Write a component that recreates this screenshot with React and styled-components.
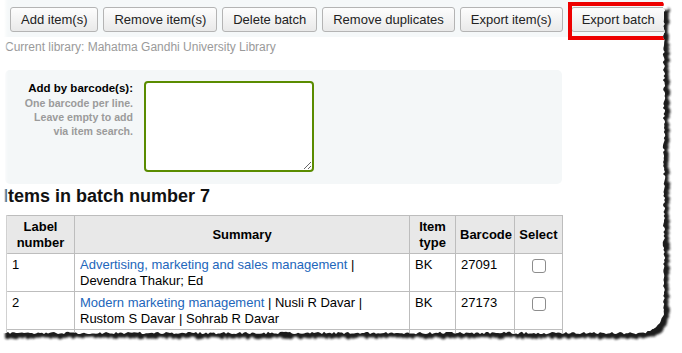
import React from 'react'
import styled, { createGlobalStyle } from 'styled-components'

const W = 682
const H = 353
const EDGE_X = 664
const EDGE_Y = 333
const CORNER = 24

// small seeded random so the torn edge is the same every render
const makeRandom = (seed) => {
  let s = seed
  return () => {
    s = (s * 16807) % 2147483647
    return (s - 1) / 2147483646
  }
}

const tornEdge = (dx, dy, seed, jag) => {
  const rnd = makeRandom(seed)
  const pts = [[0, 0], [EDGE_X, 0]]
  for (let y = 2; y < EDGE_Y - CORNER; y += 2) {
    pts.push([EDGE_X + (rnd() - 0.5) * jag, y])
  }
  for (let a = 0; a <= 90; a += 6) {
    const rad = (a * Math.PI) / 180
    pts.push([
      EDGE_X - CORNER + Math.cos(rad) * CORNER + (rnd() - 0.5) * jag * 0.7,
      EDGE_Y - CORNER + Math.sin(rad) * CORNER + (rnd() - 0.5) * jag * 0.7,
    ])
  }
  for (let x = EDGE_X - CORNER - 2; x > 0; x -= 2) {
    pts.push([x, EDGE_Y + (rnd() - 0.5) * jag])
  }
  pts.push([0, EDGE_Y])
  return pts.map(([x, y]) => [x + dx, y + dy])
}

const paperPts = tornEdge(0, 0, 11, 2.4)
const shadowPts = tornEdge(5, 5, 29, 3)
shadowPts[1][1] = 10
const paperClip = `polygon(${paperPts.map(([x, y]) => `${x.toFixed(1)}px ${y.toFixed(1)}px`).join(', ')})`
const shadowPoly = shadowPts.map(([x, y]) => `${x.toFixed(1)},${y.toFixed(1)}`).join(' ')

const rows = [
  { n: 1, title: 'Advertising, marketing and sales management', authors: 'Devendra Thakur; Ed', type: 'BK', barcode: '27091' },
  { n: 2, title: 'Modern marketing management', authors: 'Nusli R Davar | Rustom S Davar | Sohrab R Davar', type: 'BK', barcode: '27173' },
  { n: 3, title: 'Marketing management', authors: 'Philip Kotler', type: 'BK', barcode: '27183' },
]

const GlobalStyle = createGlobalStyle`
  html, body {
    margin: 0;
    padding: 0;
    background: #fff;
  }
  body {
    font-family: "Liberation Sans", Arial, sans-serif;
    color: #000;
  }
`

const Sheet = styled.div`
  position: relative;
  width: ${W}px;
  height: ${H}px;
  overflow: hidden;
  background: #fff;
`

const ShadowSvg = styled.svg`
  position: absolute;
  left: 0;
  top: 0;
`

const Paper = styled.div`
  position: relative;
  z-index: 1;
  width: ${W}px;
  height: ${H}px;
  overflow: hidden;
  background: #fff;
`

const LeftFade = styled.div`
  position: absolute;
  left: 0;
  top: 0;
  bottom: 0;
  width: 8px;
  background: linear-gradient(to right, #fff 0, #fff 4px, rgba(255, 255, 255, 0.4) 6px, rgba(255, 255, 255, 0) 8px);
`

const Toolbar = styled.div`
  display: flex;
  gap: 5px;
  padding: 7px 0 5px 10px;
  background: #f5f8f9;
`

const Button = styled.button`
  height: 25px;
  padding: 0 10px;
  border: 1px solid #b4b4b4;
  border-radius: 3px;
  background: linear-gradient(#fdfdfd, #e9e9e9);
  font-family: "Liberation Sans", Arial, sans-serif;
  font-size: 13px;
  color: #222;
  white-space: nowrap;
`

const Highlight = styled.span`
  position: relative;
  display: inline-flex;
  margin-left: 3px;

  &::after {
    content: '';
    position: absolute;
    left: -3px;
    top: -5px;
    right: -8px;
    bottom: -8px;
    border: 4px solid #ee0000;
  }
`

const LibraryNote = styled.div`
  padding: 2px 0 0 5px;
  font-size: 12px;
  line-height: 16px;
  color: #9a9a9a;
`

const Content = styled.div`
  padding-left: 5px;
`

const FormPanel = styled.div`
  display: flex;
  align-items: flex-start;
  width: 557px;
  margin-top: 15px;
  padding: 11px 0 12px;
  box-sizing: border-box;
  background: #f4f7f8;
  border-radius: 5px;
`

const LabelCol = styled.div`
  width: 128px;
  text-align: right;
`

const FieldLabel = styled.div`
  font-size: 11.5px;
  font-weight: bold;
  line-height: 14px;
`

const Hint = styled.div`
  margin-top: 1px;
  font-size: 10.6px;
  font-weight: bold;
  line-height: 14px;
  color: #9b9b9b;
`

const Barcodes = styled.textarea`
  width: 170px;
  height: 91px;
  margin: 0 0 0 11px;
  box-sizing: border-box;
  border: 2px solid #5a8c00;
  border-radius: 4px;
  background: #fff;
  outline: none;
`

const Heading = styled.h1`
  margin: 2px 0 8px -2px;
  font-size: 18px;
  line-height: 21px;
  font-weight: bold;
  color: #111;
`

const Table = styled.table`
  width: 556px;
  margin-left: 1px;
  border-collapse: collapse;
  table-layout: fixed;
  font-size: 13px;
  line-height: 16px;
`

const Th = styled.th`
  padding: 3px 4px 2px;
  border: 1px solid #bdbdbd;
  background: #e8e8e8;
  font-weight: bold;
  text-align: center;
  vertical-align: middle;
`

const Td = styled.td`
  height: 32px;
  padding: 3px 4px 2px 5px;
  border: 1px solid #bdbdbd;
  vertical-align: top;
`

const TitleLink = styled.a`
  color: #2266bb;
  text-decoration: none;
`

const Check = styled.input`
  display: block;
  appearance: none;
  width: 14px;
  height: 14px;
  margin: 2px auto 0;
  border: 1px solid #8d8d8d;
  border-radius: 3px;
  background: #fff;
`

export default function App() {
  return (
    <>
      <GlobalStyle />
      <Sheet>
        <ShadowSvg width={W} height={H} viewBox={`0 0 ${W} ${H}`}>
          <defs>
            <filter id="tornShadow" x="-5%" y="-5%" width="110%" height="110%">
              <feGaussianBlur stdDeviation="1.3" />
            </filter>
          </defs>
          <polygon points={shadowPoly} fill="#1e1e1e" filter="url(#tornShadow)" />
        </ShadowSvg>
        <Paper style={{ clipPath: paperClip }}>
          <Toolbar>
            <Button>Add item(s)</Button>
            <Button>Remove item(s)</Button>
            <Button>Delete batch</Button>
            <Button>Remove duplicates</Button>
            <Button>Export item(s)</Button>
            <Highlight>
              <Button>Export batch</Button>
            </Highlight>
          </Toolbar>
          <LibraryNote>Current library: Mahatma Gandhi University Library</LibraryNote>
          <Content>
            <FormPanel>
              <LabelCol>
                <FieldLabel>Add by barcode(s):</FieldLabel>
                <Hint>
                  One barcode per line.
                  <br />
                  Leave empty to add
                  <br />
                  via item search.
                </Hint>
              </LabelCol>
              <Barcodes />
            </FormPanel>
            <Heading>Items in batch number 7</Heading>
            <Table>
              <colgroup>
                <col style={{ width: 68 }} />
                <col style={{ width: 335 }} />
                <col style={{ width: 46 }} />
                <col style={{ width: 59 }} />
                <col style={{ width: 48 }} />
              </colgroup>
              <thead>
                <tr>
                  <Th>Label number</Th>
                  <Th>Summary</Th>
                  <Th>Item type</Th>
                  <Th>Barcode</Th>
                  <Th>Select</Th>
                </tr>
              </thead>
              <tbody>
                {rows.map((r) => (
                  <tr key={r.n}>
                    <Td>{r.n}</Td>
                    <Td>
                      <TitleLink href="#">{r.title}</TitleLink> | {r.authors}
                    </Td>
                    <Td>{r.type}</Td>
                    <Td>{r.barcode}</Td>
                    <Td>
                      <Check type="checkbox" />
                    </Td>
                  </tr>
                ))}
              </tbody>
            </Table>
          </Content>
          <LeftFade />
        </Paper>
      </Sheet>
    </>
  )
}
